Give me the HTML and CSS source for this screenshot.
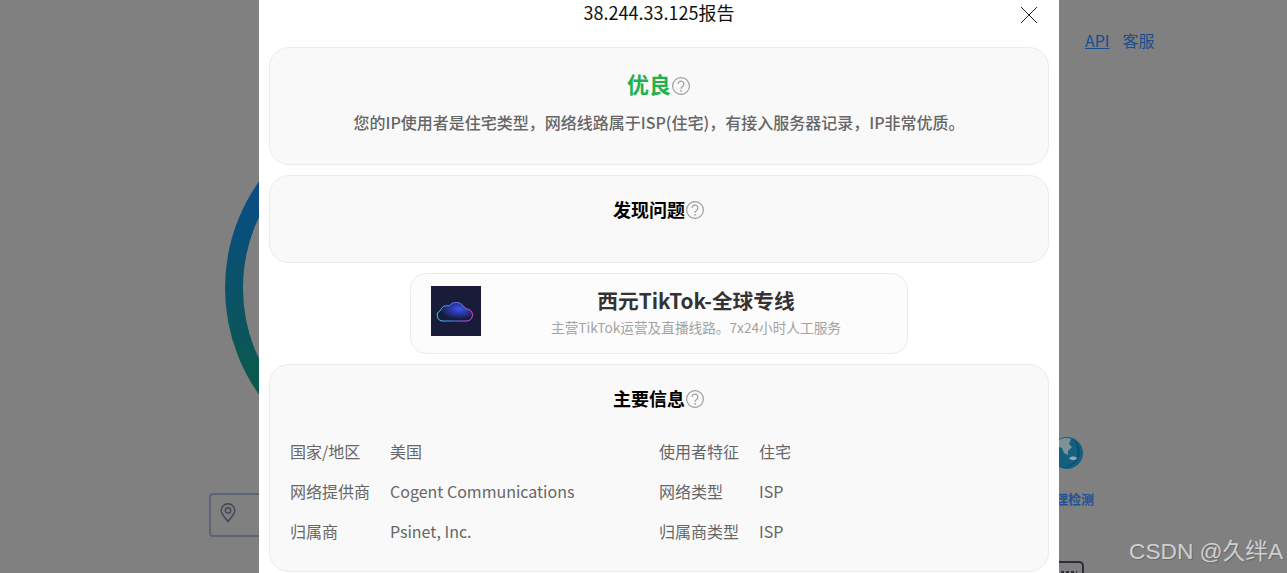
FILE: index.html
```html
<!DOCTYPE html>
<html lang="zh-CN">
<head>
    <meta charset="UTF-8">
    <title>38.244.33.125报告</title>
    <link rel="stylesheet" href="styles.css">
</head>
<body>
    <!-- Pagina detras del modal -->
    <div class="behind">
        <svg class="ring" width="368" height="368" viewBox="0 0 368 368">
            <defs>
                <linearGradient id="ringGrad" gradientUnits="userSpaceOnUse" x1="0" y1="78" x2="0" y2="291">
                    <stop offset="0" stop-color="#0a4c88"/>
                    <stop offset="1" stop-color="#0a5a4a"/>
                </linearGradient>
            </defs>
            <circle cx="184" cy="184" r="175" fill="none" stroke="url(#ringGrad)" stroke-width="18"/>
        </svg>
        <nav class="top-links">
            <a class="api-link" href="#">API</a>
            <span>客服</span>
        </nav>
        <div class="search-box">
            <svg width="16" height="20" viewBox="0 0 16 20" fill="none" stroke="#3d4456" stroke-width="1.4">
                <path d="M8 18.6 C5.5 15 1.2 11.5 1.2 7.6 A6.8 6.8 0 0 1 14.8 7.6 C14.8 11.5 10.500 15 8 18.6 Z"/>
                <circle cx="8" cy="7.400" r="2.700"/>
            </svg>
        </div>
        <div class="tool">
            <svg width="32" height="32" viewBox="0 0 32 32">
                <circle cx="16" cy="16" r="16" fill="#14607f"/>
                <path d="M21 1 A16 16 0 0 1 8 30 C20 32 30 22 25 6 Z" fill="#0f4e6e"/>
                <path d="M5 5 C10 1 16 0 20 2 L18 7 L21 10 L17 14 L17 18 L13 16 L11 11 L5 9 Z" fill="#7f9298"/>
                <path d="M18 21 C20 19 25 19 26 21 C25 24 20 24 18 21 Z" fill="#8fa6af"/>
            </svg>
            <p>代理检测</p>
        </div>
        <div class="corner-box"></div>
    </div>

    <div class="overlay">
        <div class="modal">
            <header class="modal-head">
                <h1>38.244.33.125报告</h1>
                <svg class="close" width="18" height="18" viewBox="0 0 18 18" stroke="#222" stroke-width="1">
                    <path d="M1 1 L17 17 M17 1 L1 17"/>
                </svg>
            </header>

            <section class="card card-score">
                <h2 class="score">优良<svg class="help" width="18" height="18" viewBox="0 0 18 18"><use href="#help"/></svg></h2>
                <p class="desc">您的IP使用者是住宅类型，网络线路属于ISP(住宅)，有接入服务器记录，IP非常优质。</p>
            </section>

            <section class="card card-issues">
                <h2>发现问题<svg class="help" width="18" height="18" viewBox="0 0 18 18"><use href="#help"/></svg></h2>
            </section>

            <a class="promo" href="#">
                <svg class="promo-img" width="50" height="50" viewBox="0 0 50 50">
                    <defs>
                        <linearGradient id="cloudLine" x1="0" y1="0" x2="1" y2="0">
                            <stop offset="0" stop-color="#35d6e0"/>
                            <stop offset="0.5" stop-color="#5a7cf0"/>
                            <stop offset="1" stop-color="#f048c0"/>
                        </linearGradient>
                        <radialGradient id="cloudFill" cx="0.62" cy="0.35" r="0.55">
                            <stop offset="0" stop-color="#3a55f0"/>
                            <stop offset="0.6" stop-color="#263090"/>
                            <stop offset="1" stop-color="#181c3c"/>
                        </radialGradient>
                    </defs>
                    <rect width="50" height="50" fill="#181c38"/>
                    <path d="M12 35 A5.500 5.500 0 0 1 9.500 24.500 A6.500 6.500 0 0 1 18 20 A9 9 0 0 1 33 21 A3 3 0 0 1 35 23 A6 6 0 0 1 36 35 Z" fill="url(#cloudFill)" stroke="url(#cloudLine)" stroke-width="1"/>
                </svg>
                <div class="promo-text">
                    <h3>西元TikTok-全球专线</h3>
                    <p>主营TikTok运营及直播线路。7x24小时人工服务</p>
                </div>
            </a>

            <section class="card card-info">
                <h2>主要信息<svg class="help" width="18" height="18" viewBox="0 0 18 18"><use href="#help"/></svg></h2>
                <div class="info-grid">
                    <div class="info-row"><span class="info-label">国家/地区</span><span>美国</span></div>
                    <div class="info-row"><span class="info-label">使用者特征</span><span>住宅</span></div>
                    <div class="info-row"><span class="info-label">网络提供商</span><span>Cogent Communications</span></div>
                    <div class="info-row"><span class="info-label">网络类型</span><span>ISP</span></div>
                    <div class="info-row"><span class="info-label">归属商</span><span>Psinet, Inc.</span></div>
                    <div class="info-row"><span class="info-label">归属商类型</span><span>ISP</span></div>
                </div>
            </section>
        </div>
    </div>

    <div class="watermark">CSDN @久绊A</div>

    <svg width="0" height="0" class="defs">
        <symbol id="help" viewBox="0 0 18 18">
            <circle cx="9" cy="9" r="8.400" fill="none" stroke="#999" stroke-width="1.100"/>
            <path d="M6.100 7 A2.900 2.900 0 1 1 10.600 9.400 C9.400 10.100 9 10.700 9 11.700" fill="none" stroke="#999" stroke-width="1.200"/>
            <circle cx="9" cy="13.800" r="0.900" fill="#999"/>
        </symbol>
    </svg>
</body>
</html>
```
FILE: styles.css
```css
/* Generales */
html, body {
    margin: 0;
    padding: 0;
    height: 573px;
    overflow: hidden;
}

body {
    position: relative;
    font-family: "Noto Sans CJK SC", "Noto Sans", sans-serif;
    background-color: #808080;
    color: #666;
}

.defs {
    position: absolute;
}

/* Pagina detras del modal */
.behind {
    position: absolute;
    inset: 0;
    overflow: hidden;
}

.ring {
    position: absolute;
    left: 225px;
    top: 104px;
}

.top-links {
    position: absolute;
    left: 1085px;
    top: 28px;
    display: flex;
    gap: 13px;
    font-size: 16px;
    line-height: 24px;
    color: #174e8f;
}

.api-link {
    color: #174e8f;
}

.search-box {
    position: absolute;
    left: 209px;
    top: 493px;
    width: 200px;
    height: 44px;
    box-sizing: border-box;
    border: 2px solid #5b6379;
    border-radius: 4px;
    padding: 8px 0 0 9px;
}

.tool {
    position: absolute;
    left: 1051px;
    top: 437px;
    width: 32px;
    height: 32px;
}

.tool p {
    position: absolute;
    top: 52px;
    right: -11px;
    margin: 0;
    font-size: 13px;
    line-height: 20px;
    font-weight: 700;
    white-space: nowrap;
    color: #1c5296;
}

.corner-box {
    position: absolute;
    left: 1000px;
    top: 561px;
    width: 80px;
    height: 10px;
    border: 2px solid #2b2f38;
    border-bottom: none;
    border-radius: 5px 5px 0 0;
}

.corner-box::after {
    content: "";
    position: absolute;
    left: 59px;
    top: 8px;
    width: 16px;
    height: 2px;
    background: repeating-linear-gradient(90deg, #2b2f38 0 3px, transparent 3px 5px);
}

/* Modal */
.overlay {
    position: absolute;
    inset: 0;
}

.modal {
    width: 800px;
    height: 573px;
    margin-left: 259px;
    box-sizing: border-box;
    padding: 0 10px;
    background-color: white;
    overflow: hidden;
}

.modal-head {
    display: flow-root;
    position: relative;
    height: 47px;
}

.modal-head h1 {
    margin: -1px 0 0;
    font-size: 18px;
    font-weight: 400;
    line-height: 26px;
    text-align: center;
    color: #111;
}

.close {
    position: absolute;
    right: 11px;
    top: 6px;
}

/* Tarjetas */
.card {
    box-sizing: border-box;
    margin-bottom: 10px;
    border: 1px solid #ebebeb;
    border-radius: 20px;
    background-color: #f9f9f9;
    padding: 0 20px;
}

.card h2 {
    margin: 0;
    padding-top: 20px;
    font-size: 18px;
    font-weight: 700;
    line-height: 26px;
    text-align: center;
    color: #000;
}

.help {
    vertical-align: -2px;
    margin: 0 1px;
}

.card-score {
    height: 118px;
}

.card h2.score {
    padding-top: 19px;
    font-size: 22px;
    line-height: 32px;
    color: #21b24b;
}

.desc {
    margin: 11px 0 0;
    font-size: 16px;
    font-weight: 500;
    line-height: 24px;
    text-align: center;
    color: #666;
}

.card-issues {
    height: 88px;
}

/* Anuncio */
.promo {
    display: flex;
    align-items: flex-start;
    box-sizing: border-box;
    width: 498px;
    height: 81px;
    margin: 0 auto 10px;
    padding: 12px 20px 0;
    border: 1px solid #ebebeb;
    border-radius: 16px;
    background-color: #fcfcfc;
    text-decoration: none;
}

.promo-img {
    flex-shrink: 0;
}

.promo-text {
    flex: 1;
    padding-left: 24px;
    text-align: center;
}

.promo-text h3 {
    margin: 0;
    font-size: 20.700px;
    font-weight: 700;
    line-height: 28px;
    color: #333;
}

.promo-text p {
    margin: 3px 0 0;
    font-size: 13.660px;
    line-height: 20px;
    color: #a3a3a3;
}

/* Informacion */
.card-info {
    height: 208px;
}

.info-grid {
    display: grid;
    grid-template-columns: 1fr 1fr;
    margin-top: 20px;
}

.info-row {
    display: flex;
    height: 40px;
    align-items: center;
    font-size: 16px;
    color: #666;
}

.info-label {
    width: 100px;
    flex-shrink: 0;
}

/* Marca de agua */
.watermark {
    position: absolute;
    left: 1129px;
    top: 535px;
    font-family: "Liberation Sans", "Noto Sans CJK SC", sans-serif;
    font-size: 22.700px;
    line-height: 32px;
    white-space: nowrap;
    color: #cfcfcf;
    text-shadow: 1px 1px 1px #666;
}
```
